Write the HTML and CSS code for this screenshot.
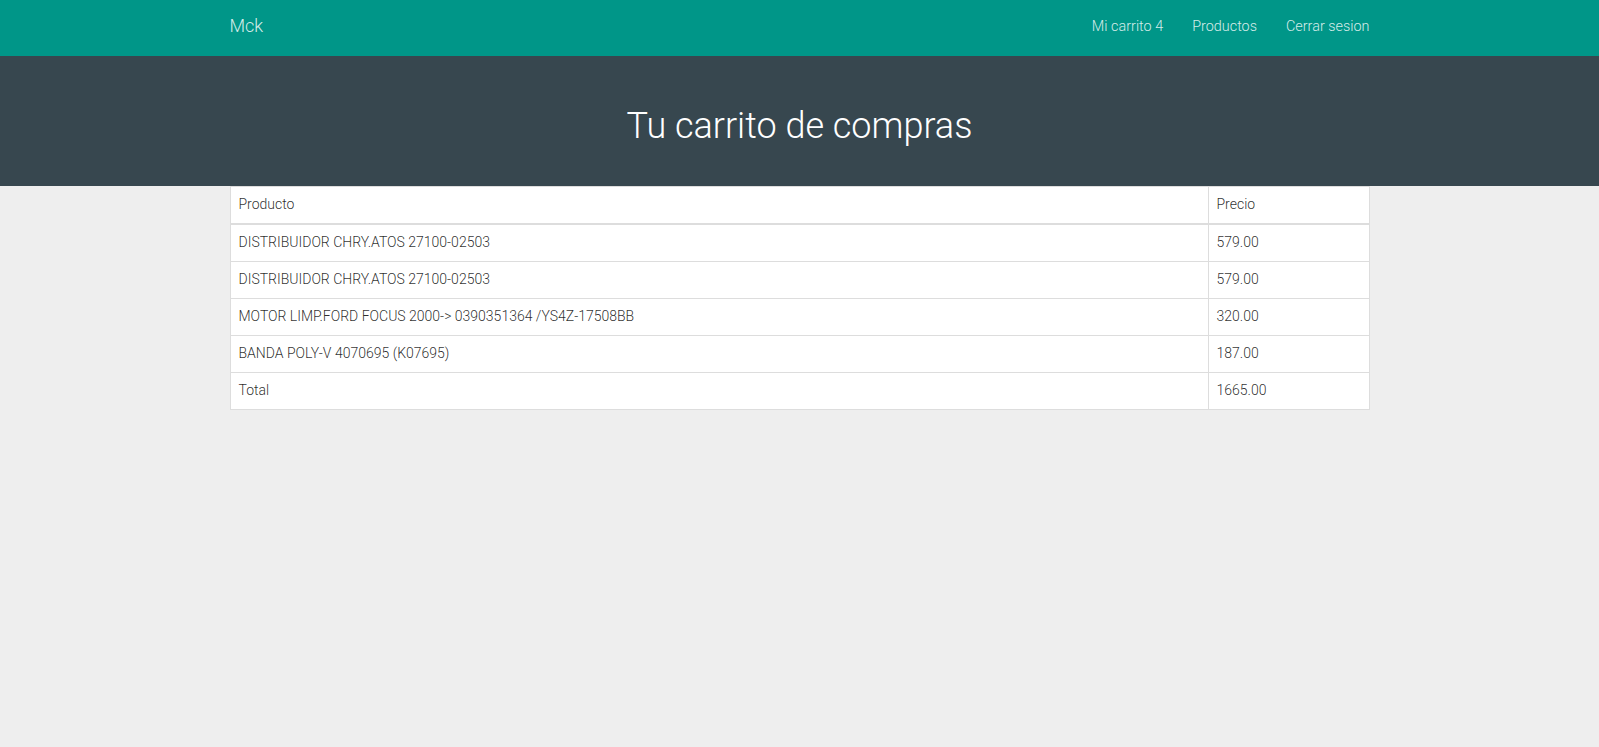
FILE: index.html
```html
<!DOCTYPE html>
<html lang="es">
<head>
<meta charset="utf-8">
<title>Mck</title>
<link rel="stylesheet" href="styles.css">
</head>
<body>
<nav class="navbar">
  <div class="container navbar-inner">
    <a class="brand" href="#">Mck</a>
    <ul class="nav-links">
      <li><a href="#">Mi carrito 4</a></li>
      <li><a href="#">Productos</a></li>
      <li><a href="#">Cerrar sesion</a></li>
    </ul>
  </div>
</nav>
<header class="hero">
  <h1>Tu carrito de compras</h1>
</header>
<main class="container">
  <table class="cart">
    <thead>
      <tr><th class="col-prod">Producto</th><th class="col-price">Precio</th></tr>
    </thead>
    <tbody>
      <tr><td>DISTRIBUIDOR CHRY.ATOS 27100-02503</td><td>579.00</td></tr>
      <tr><td>DISTRIBUIDOR CHRY.ATOS 27100-02503</td><td>579.00</td></tr>
      <tr><td>MOTOR LIMP.FORD FOCUS 2000-&gt; 0390351364 /YS4Z-17508BB</td><td>320.00</td></tr>
      <tr><td>BANDA POLY-V 4070695 (K07695)</td><td>187.00</td></tr>
      <tr><td>Total</td><td>1665.00</td></tr>
    </tbody>
  </table>
</main>
</body>
</html>
```

FILE: styles.css
```css
* { box-sizing: border-box; }
html, body { margin: 0; padding: 0; }
body {
  background: #eeeeee;
  font-family: Roboto, "Liberation Sans", sans-serif;
  font-weight: 300;
  font-size: 14px;
  line-height: 20px;
  color: rgba(0,0,0,0.84);
}
.container {
  width: 1140px;
  margin: 0 auto;
}
.navbar {
  background: #009688;
  height: 56px;
}
.navbar-inner {
  display: flex;
  align-items: center;
  justify-content: space-between;
  height: 56px;
  padding-bottom: 4px;
}
.brand {
  color: rgba(255,255,255,0.84);
  text-decoration: none;
  font-size: 18px;
  line-height: 20px;
}
.nav-links {
  list-style: none;
  margin: 0;
  padding: 0;
  display: flex;
  gap: 29px;
}
.nav-links a {
  color: rgba(255,255,255,0.84);
  text-decoration: none;
  font-size: 14.4px;
}
.hero {
  background: #37474f;
  height: 130px;
  display: flex;
  align-items: center;
  justify-content: center;
}
.hero h1 {
  margin: 0;
  color: #fff;
  font-weight: 300;
  font-size: 36px;
  line-height: 40px;
  padding-top: 10px;
}
.cart {
  width: 100%;
  border-collapse: collapse;
  background: #fff;
  border: 1px solid #dddddd;
}
.cart th, .cart td {
  text-align: left;
  font-weight: 300;
  padding: 7px 8px 9px;
  line-height: 20px;
  border: 1px solid #dddddd;
  vertical-align: top;
}
.cart thead th { border-bottom: 2px solid #dddddd; }
.col-price { width: 161px; }
```
